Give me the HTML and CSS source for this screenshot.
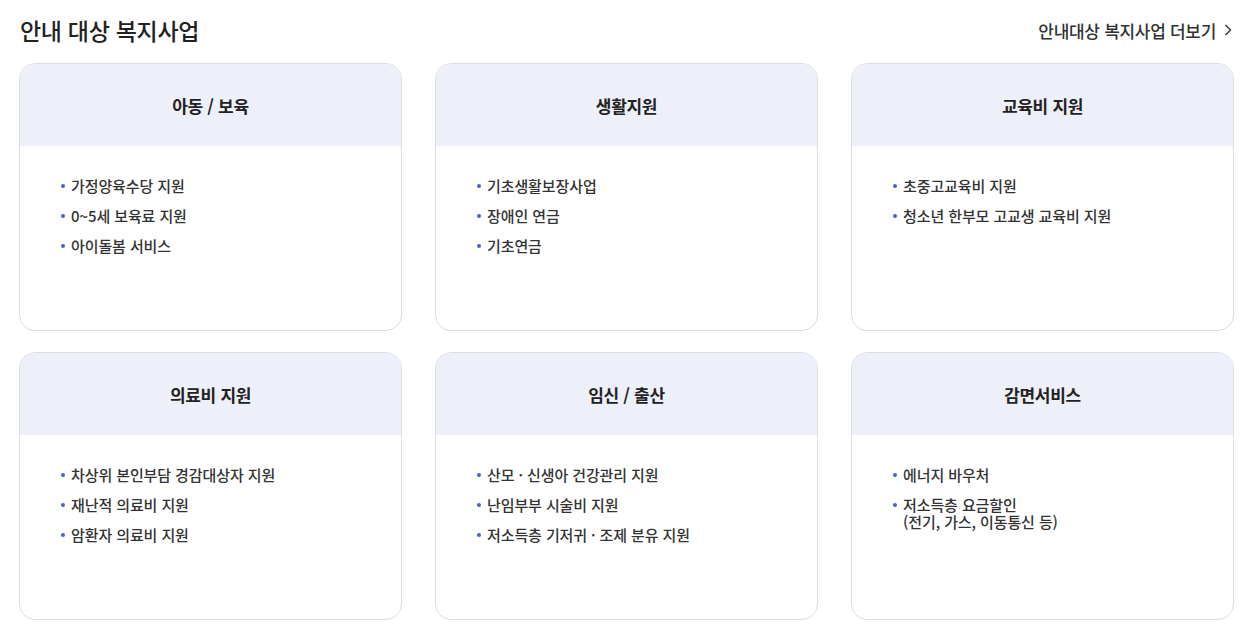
FILE: index.html
```html
<!DOCTYPE html>
<html lang="ko">
<head>
    <meta charset="UTF-8">
    <meta name="viewport" content="width=device-width, initial-scale=1.0">
    <title>안내 대상 복지사업</title>
    <link rel="stylesheet" href="styles.css">
</head>
<body>

<section class="welfare">
    <div class="welfare-head">
        <h2>안내 대상 복지사업</h2>
        <a class="more" href="#">안내대상 복지사업 더보기
            <svg width="8" height="12" viewBox="0 0 8 12"><path d="M1.5 1 L6.5 6 L1.5 11" fill="none" stroke="#333" stroke-width="1.4"/></svg>
        </a>
    </div>

    <div class="card-grid">
        <div class="card">
            <h3>아동 / 보육</h3>
            <ul>
                <li>가정양육수당 지원</li>
                <li>0~5세 보육료 지원</li>
                <li>아이돌봄 서비스</li>
            </ul>
        </div>
        <div class="card">
            <h3>생활지원</h3>
            <ul>
                <li>기초생활보장사업</li>
                <li>장애인 연금</li>
                <li>기초연금</li>
            </ul>
        </div>
        <div class="card">
            <h3>교육비 지원</h3>
            <ul>
                <li>초중고교육비 지원</li>
                <li>청소년 한부모 고교생 교육비 지원</li>
            </ul>
        </div>
        <div class="card">
            <h3>의료비 지원</h3>
            <ul>
                <li>차상위 본인부담 경감대상자 지원</li>
                <li>재난적 의료비 지원</li>
                <li>암환자 의료비 지원</li>
            </ul>
        </div>
        <div class="card">
            <h3>임신 / 출산</h3>
            <ul>
                <li>산모 · 신생아 건강관리 지원</li>
                <li>난임부부 시술비 지원</li>
                <li>저소득층 기저귀 · 조제 분유 지원</li>
            </ul>
        </div>
        <div class="card">
            <h3>감면서비스</h3>
            <ul>
                <li>에너지 바우처</li>
                <li>저소득층 요금할인<br>(전기, 가스, 이동통신 등)</li>
            </ul>
        </div>
    </div>
</section>

</body>
</html>
```

FILE: styles.css
```css
body {
    margin: 0;
    font-family: "Noto Sans CJK KR", "Noto Sans", sans-serif;
    color: #333;
    background: #fff;
}

.welfare {
    padding: 0 11px 0 19px;
}

.welfare-head {
    display: flex;
    justify-content: space-between;
    align-items: center;
    height: 63px;
}

.welfare-head h2 {
    margin: 0 0 4px 1px;
    font-size: 23px;
    font-weight: 500;
    color: #222;
    letter-spacing: -0.3px;
}

.more {
    display: flex;
    align-items: center;
    gap: 8px;
    font-size: 17px;
    font-weight: 500;
    color: #333;
    text-decoration: none;
    letter-spacing: -0.3px;
    margin: 0 2px 3px 0;
}

.card-grid {
    display: grid;
    grid-template-columns: repeat(3, 1fr);
    column-gap: 33px;
    row-gap: 21px;
}

.card {
    height: 268px;
    box-sizing: border-box;
    border: 1px solid #dedede;
    border-radius: 16px;
    overflow: hidden;
}

.card h3 {
    margin: 0;
    height: 82px;
    display: flex;
    align-items: center;
    justify-content: center;
    background-color: #eef0f9;
    font-size: 17px;
    font-weight: 700;
    color: #222;
    letter-spacing: -0.3px;
}

.card ul {
    list-style: none;
    margin: 0;
    padding: 31px 20px 0 51px;
}

.card li {
    position: relative;
    font-size: 15px;
    font-weight: 500;
    line-height: 17px;
    margin-bottom: 13px;
    color: #333;
    letter-spacing: -0.1px;
}

.card li::before {
    content: "";
    position: absolute;
    left: -10px;
    top: 7px;
    width: 4px;
    height: 4px;
    border-radius: 50%;
    background-color: #4b5fd3;
}
```
